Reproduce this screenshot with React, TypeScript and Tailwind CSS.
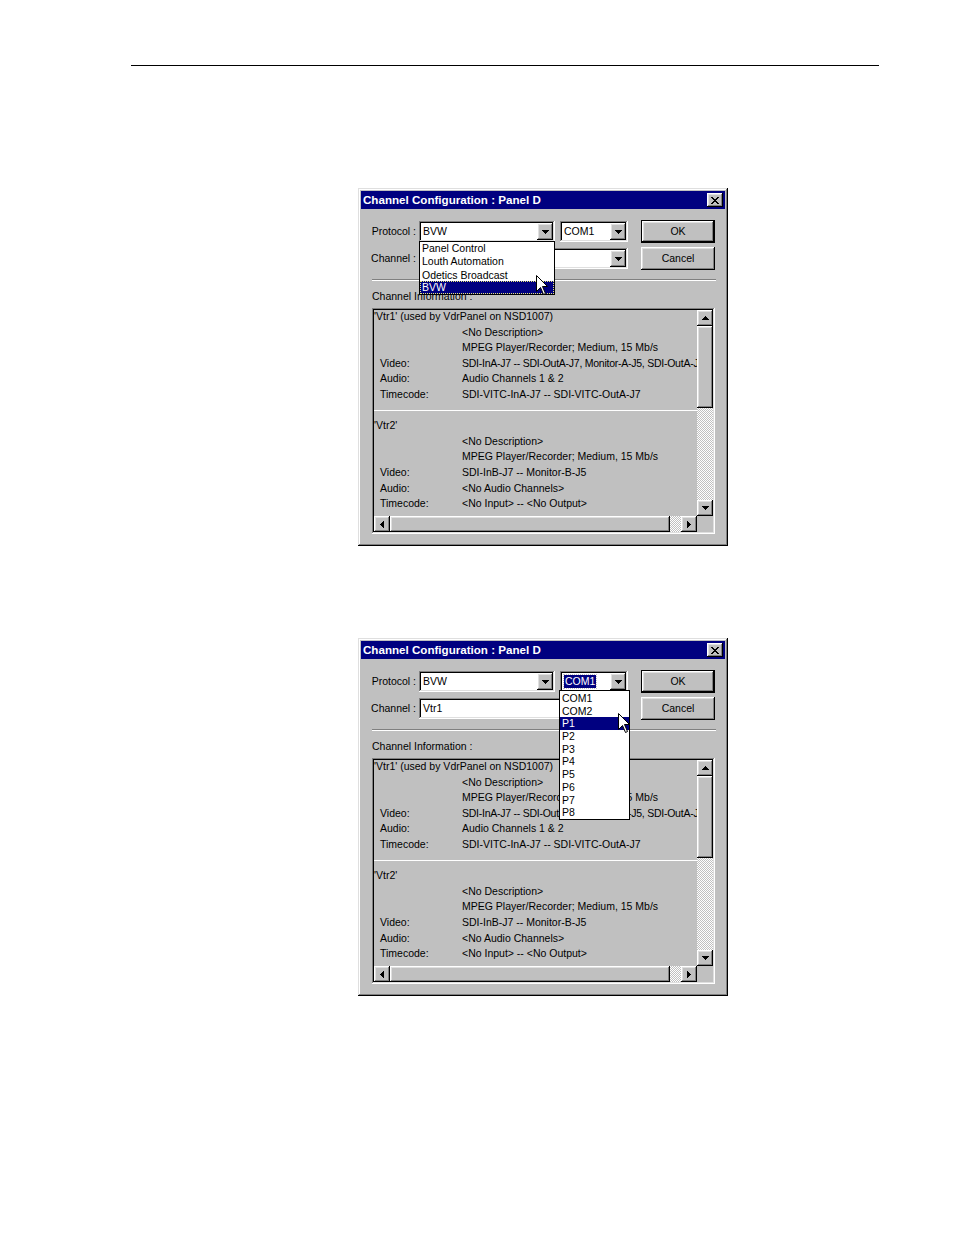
import React from 'react';

const raised =
  'shadow-[inset_-1px_-1px_#000000,inset_1px_1px_#ffffff,inset_-2px_-2px_#808080,inset_2px_2px_#dfdfdf]';
const sunken =
  'shadow-[inset_-1px_-1px_#ffffff,inset_1px_1px_#808080,inset_-2px_-2px_#dfdfdf,inset_2px_2px_#000000]';
const windowEdge =
  'shadow-[inset_-1px_-1px_#000000,inset_1px_1px_#dfdfdf,inset_-2px_-2px_#808080,inset_2px_2px_#ffffff]';
const checker =
  'bg-[image:repeating-conic-gradient(#c0c0c0_0%_25%,#ffffff_0%_50%)] bg-[length:2px_2px]';

type Dir = 'up' | 'down' | 'left' | 'right';

const Arrow: React.FC<{ dir: Dir }> = ({ dir }) => {
  if (dir === 'up' || dir === 'down') {
    return (
      <svg width="7" height="4" viewBox="0 0 7 4" shapeRendering="crispEdges">
        <polygon points={dir === 'down' ? '0,0 7,0 3.5,4' : '0,4 7,4 3.5,0'} fill="#000" />
      </svg>
    );
  }
  return (
    <svg width="4" height="7" viewBox="0 0 4 7" shapeRendering="crispEdges">
      <polygon points={dir === 'right' ? '0,0 0,7 4,3.5' : '4,0 4,7 0,3.5'} fill="#000" />
    </svg>
  );
};

const ScrollBtn: React.FC<{ dir: Dir }> = ({ dir }) => (
  <div className={`w-[16px] h-[16px] shrink-0 bg-[#c0c0c0] ${raised} flex items-center justify-center`}>
    <Arrow dir={dir} />
  </div>
);

const Combo: React.FC<{ w: string; children?: React.ReactNode }> = ({ w, children }) => (
  <div className={`${w} h-[21px] shrink-0 bg-white ${sunken} p-[2px] flex`}>
    <div className="flex-1 flex items-center pl-[2px] overflow-hidden whitespace-nowrap">{children}</div>
    <div className={`w-[16px] h-[17px] bg-[#c0c0c0] ${raised} flex items-center justify-center`}>
      <Arrow dir="down" />
    </div>
  </div>
);

const Cursor: React.FC<{ className: string }> = ({ className }) => (
  <svg className={className} width="13" height="21" viewBox="0 0 13 21">
    <path
      d="M0.5 0.5 L0.5 16.5 L4.5 12.5 L7.5 19.5 L9.5 18.5 L6.5 11.5 L11.5 11.5 Z"
      fill="#ffffff"
      stroke="#000000"
      strokeWidth="1"
    />
  </svg>
);

interface Row {
  l?: string;
  v: string;
  head?: boolean;
  tight?: boolean;
}

const vtr1: Row[] = [
  { v: "'Vtr1' (used by VdrPanel on NSD1007)", head: true },
  { v: '<No Description>' },
  { v: 'MPEG Player/Recorder; Medium, 15 Mb/s' },
  { l: 'Video:', v: 'SDI-InA-J7 -- SDI-OutA-J7, Monitor-A-J5, SDI-OutA-J7', tight: true },
  { l: 'Audio:', v: 'Audio Channels 1 & 2' },
  { l: 'Timecode:', v: 'SDI-VITC-InA-J7 -- SDI-VITC-OutA-J7' },
];

const vtr2: Row[] = [
  { v: "'Vtr2'", head: true },
  { v: '<No Description>' },
  { v: 'MPEG Player/Recorder; Medium, 15 Mb/s' },
  { l: 'Video:', v: 'SDI-InB-J7 -- Monitor-B-J5' },
  { l: 'Audio:', v: '<No Audio Channels>' },
  { l: 'Timecode:', v: '<No Input> -- <No Output>' },
];

const InfoRow: React.FC<{ row: Row }> = ({ row }) =>
  row.head ? (
    <div className="h-[15.6px] leading-[11px] whitespace-nowrap">{row.v}</div>
  ) : (
    <div className="h-[15.6px] leading-[11px] whitespace-nowrap flex">
      <span className="w-[88px] shrink-0 pl-[6px]">{row.l}</span>
      <span className={row.tight ? 'tracking-[-0.25px]' : ''}>{row.v}</span>
    </div>
  );

const Dialog: React.FC<{ variant: 1 | 2 }> = ({ variant }) => (
  <div className={`relative w-[370px] h-[358px] bg-[#c0c0c0] ${windowEdge} p-[3px] flex flex-col`}>
    <div className="h-[18px] bg-[#000080] flex items-center justify-between pl-[2px] pr-[2px]">
      <span className="text-white font-bold text-[11.6px] leading-[18px]">Channel Configuration : Panel D</span>
      <div className={`w-[16px] h-[14px] bg-[#c0c0c0] ${raised} flex items-center justify-center`}>
        <svg width="8" height="7" viewBox="0 0 8 7" shapeRendering="crispEdges">
          <path d="M0 0h2v1h-2zM6 0h2v1h-2zM1 1h2v1h-2zM5 1h2v1h-2zM2 2h4v1h-4zM3 3h2v1h-2zM2 4h4v1h-4zM1 5h2v1h-2zM5 5h2v1h-2zM0 6h2v1h-2zM6 6h2v1h-2z" fill="#000" />
        </svg>
      </div>
    </div>

    <div className="flex items-center h-[23px] mt-[11px]">
      <span className="w-[58px] text-right pr-[3px]">Protocol :</span>
      <Combo w="w-[136px]">BVW</Combo>
      <div className="ml-[5px]">
        <Combo w="w-[68px]">
          {variant === 2 ? (
            <span className="bg-[#000080] text-white px-[1px] leading-[13px] outline outline-1 outline-dotted outline-[#c0c0c0]">COM1</span>
          ) : (
            'COM1'
          )}
        </Combo>
      </div>
      <div className="ml-[13px] w-[74px] h-[23px] border border-black">
        <div className={`w-full h-full ${raised} flex items-center justify-center`}>OK</div>
      </div>
    </div>

    <div className="flex items-center h-[23px] mt-[4px]">
      <span className="w-[58px] text-right pr-[3px]">Channel :</span>
      <Combo w="w-[209px]">{variant === 2 ? 'Vtr1' : ''}</Combo>
      <div className={`ml-[13px] w-[74px] h-[23px] ${raised} flex items-center justify-center`}>Cancel</div>
    </div>

    <div className="mt-[9px] ml-[11px] w-[344px] border-t border-[#808080] border-b border-b-white" />

    <div className="mt-[8px] ml-[11px] h-[14px] leading-[14px]">Channel Information :</div>

    <div className={`mt-[5px] ml-[11px] w-[343px] h-[226px] ${sunken} p-[2px] flex flex-col`}>
      <div className="flex flex-1 min-h-0">
        <div className="flex-1 overflow-hidden pt-[1px]">
          {vtr1.map((r, i) => (
            <InfoRow key={`a${i}`} row={r} />
          ))}
          <div className="h-[15.6px] pt-[5px]">
            <div className="border-t border-white" />
          </div>
          {vtr2.map((r, i) => (
            <InfoRow key={`b${i}`} row={r} />
          ))}
        </div>
        <div className="w-[16px] flex flex-col">
          <ScrollBtn dir="up" />
          <div className={`h-[82px] bg-[#c0c0c0] ${raised}`} />
          <div className={`flex-1 ${checker}`} />
          <ScrollBtn dir="down" />
        </div>
      </div>
      <div className="h-[16px] flex">
        <ScrollBtn dir="left" />
        <div className={`w-[280px] bg-[#c0c0c0] ${raised}`} />
        <div className={`flex-1 ${checker}`} />
        <ScrollBtn dir="right" />
        <div className="w-[16px] bg-[#c0c0c0]" />
      </div>
    </div>

    {variant === 1 ? (
      <>
        <div className="absolute left-[61px] top-[53px] w-[136px] h-[54px] bg-white border border-black">
          <div className="h-[13px] leading-[13px] pl-[2px] whitespace-nowrap">Panel Control</div>
          <div className="h-[13px] leading-[13px] pl-[2px] whitespace-nowrap">Louth Automation</div>
          <div className="h-[13px] leading-[14px] pl-[2px] whitespace-nowrap overflow-hidden">Odetics Broadcast</div>
          <div className="h-[13px] leading-[11px] pl-[1px] bg-[#000080] text-white border border-dotted border-[#e8e878]">BVW</div>
        </div>
        <Cursor className="absolute left-[178px] top-[87px]" />
      </>
    ) : (
      <>
        <div className="absolute left-[201px] top-[52px] w-[71px] h-[130px] bg-white border border-black pt-[1px]">
          {['COM1', 'COM2', 'P1', 'P2', 'P3', 'P4', 'P5', 'P6', 'P7', 'P8'].map((p) => (
            <div
              key={p}
              className={
                p === 'P1'
                  ? 'h-[12.7px] leading-[12.7px] pl-[2px] bg-[#000080] text-white'
                  : 'h-[12.7px] leading-[12.7px] pl-[2px]'
              }
            >
              {p}
            </div>
          ))}
        </div>
        <Cursor className="absolute left-[260px] top-[75px]" />
      </>
    )}
  </div>
);

export default function App() {
  return (
    <div className="w-[954px] h-[1235px] bg-white flex flex-col font-['Liberation_Sans',Arial,sans-serif] text-[10.5px] text-black">
      <div className="mt-[65px] ml-[131px] w-[748px] h-[1px] bg-black" />
      <div className="mt-[122px] ml-[358px]">
        <Dialog variant={1} />
      </div>
      <div className="mt-[92px] ml-[358px]">
        <Dialog variant={2} />
      </div>
    </div>
  );
}
